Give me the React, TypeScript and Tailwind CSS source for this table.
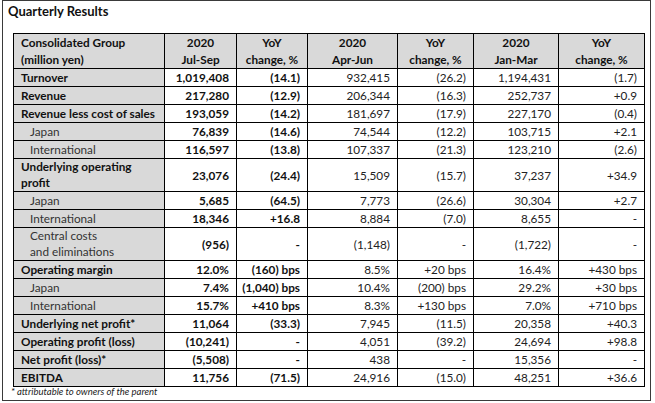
type Row = {
  label: string[];
  sub?: boolean;
  values: string[];
};

const rows: Row[] = [
  { label: ["Turnover"], values: ["1,019,408", "(14.1)", "932,415", "(26.2)", "1,194,431", "(1.7)"] },
  { label: ["Revenue"], values: ["217,280", "(12.9)", "206,344", "(16.3)", "252,737", "+0.9"] },
  { label: ["Revenue less cost of sales"], values: ["193,059", "(14.2)", "181,697", "(17.9)", "227,170", "(0.4)"] },
  { label: ["Japan"], sub: true, values: ["76,839", "(14.6)", "74,544", "(12.2)", "103,715", "+2.1"] },
  { label: ["International"], sub: true, values: ["116,597", "(13.8)", "107,337", "(21.3)", "123,210", "(2.6)"] },
  { label: ["Underlying operating", "profit"], values: ["23,076", "(24.4)", "15,509", "(15.7)", "37,237", "+34.9"] },
  { label: ["Japan"], sub: true, values: ["5,685", "(64.5)", "7,773", "(26.6)", "30,304", "+2.7"] },
  { label: ["International"], sub: true, values: ["18,346", "+16.8", "8,884", "(7.0)", "8,655", "-"] },
  { label: ["Central costs", "and eliminations"], sub: true, values: ["(956)", "-", "(1,148)", "-", "(1,722)", "-"] },
  { label: ["Operating margin"], values: ["12.0%", "(160) bps", "8.5%", "+20 bps", "16.4%", "+430 bps"] },
  { label: ["Japan"], sub: true, values: ["7.4%", "(1,040) bps", "10.4%", "(200) bps", "29.2%", "+30 bps"] },
  { label: ["International"], sub: true, values: ["15.7%", "+410 bps", "8.3%", "+130 bps", "7.0%", "+710 bps"] },
  { label: ["Underlying net profit*"], values: ["11,064", "(33.3)", "7,945", "(11.5)", "20,358", "+40.3"] },
  { label: ["Operating profit (loss)"], values: ["(10,241)", "-", "4,051", "(39.2)", "24,694", "+98.8"] },
  { label: ["Net profit (loss)*"], values: ["(5,508)", "-", "438", "-", "15,356", "-"] },
  { label: ["EBITDA"], values: ["11,756", "(71.5)", "24,916", "(15.0)", "48,251", "+36.6"] },
];

const headers = [
  ["2020", "Jul-Sep"],
  ["YoY", "change, %"],
  ["2020", "Apr-Jun"],
  ["YoY", "change, %"],
  ["2020", "Jan-Mar"],
  ["YoY", "change, %"],
];

export default function App() {
  return (
    <div className="h-[403px] w-[655px] bg-white pl-[2px] font-['Lato',sans-serif] text-[#111]">
      <div className="flex h-[401px] w-[649px] flex-col border border-[#3a3a3a]">
        <h1 className="pl-[5px] pt-[2px] text-[13px] font-bold leading-[16px]">
          Quarterly Results
        </h1>
        <table className="ml-[10px] mt-[14px] w-[631px] table-fixed border-collapse text-[11.75px]">
          <colgroup>
            <col className="w-[151px]" />
            <col className="w-[72px]" />
            <col className="w-[71px]" />
            <col className="w-[90px]" />
            <col className="w-[76px]" />
            <col className="w-[85px]" />
            <col className="w-[86px]" />
          </colgroup>
          <thead>
            <tr className="bg-[#d9d9d9]">
              <th className="border border-black px-[7px] text-left font-bold leading-[17px]">
                Consolidated Group
                <br />
                (million yen)
              </th>
              {headers.map((h, i) => (
                <th
                  key={i}
                  className="border border-black px-1 text-center font-bold leading-[17px]"
                >
                  {h[0]}
                  <br />
                  {h[1]}
                </th>
              ))}
            </tr>
          </thead>
          <tbody>
            {rows.map((r, i) => (
              <tr key={i}>
                <td
                  className={`border border-black bg-[#d9d9d9] ${
                    r.label.length > 1 ? "leading-[16px]" : "leading-[17px]"
                  } ${
                    r.sub
                      ? "pl-[16px] font-normal text-[#333]"
                      : "pl-[7px] font-bold"
                  }`}
                >
                  {r.label.map((l, j) => (
                    <div key={j}>{l}</div>
                  ))}
                </td>
                {r.values.map((v, j) => (
                  <td
                    key={j}
                    className={`border border-black pr-[7px] text-right leading-[17px] ${
                      j < 2 ? "font-bold" : "font-normal text-[#222]"
                    }`}
                  >
                    {v}
                  </td>
                ))}
              </tr>
            ))}
          </tbody>
        </table>
        <p className="pl-[8px] text-[9.5px] italic leading-[10px] text-[#222]">
          * attributable to owners of the parent
        </p>
      </div>
    </div>
  );
}
